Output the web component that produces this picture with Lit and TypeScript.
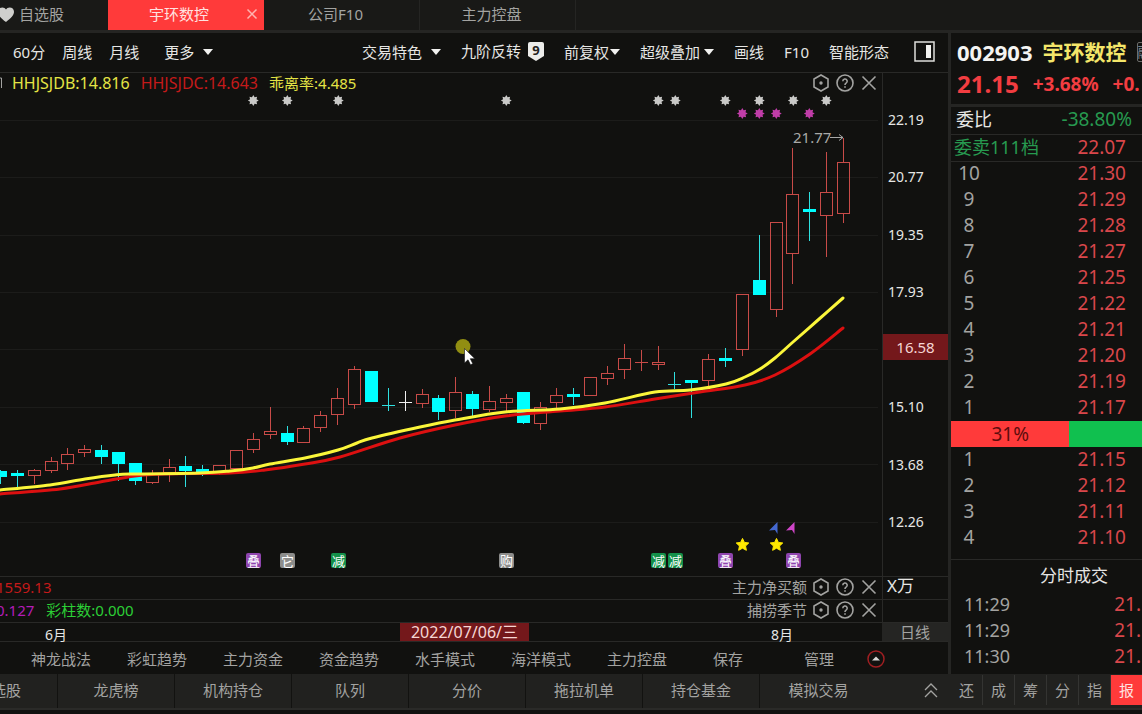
import { LitElement, html, svg, css } from "lit";
import { customElement } from "lit/decorators.js";
import { classMap } from "lit/directives/class-map.js";
import { styleMap } from "lit/directives/style-map.js";

type Kind = "up" | "down" | "flat";
/** [high, low, body top, body bottom, kind] in canvas units */
type Candle = [number, number, number, number, Kind];

const CANDLES: Candle[] = [
  [470, 484, 471, 477, "down"], [470, 487, 473, 476, "down"], [469, 484, 470, 475, "up"],
  [457, 473, 461, 470, "up"], [448, 470, 454, 463, "up"], [445, 457, 449, 452, "up"],
  [445, 464, 450, 457, "down"], [452, 481, 452, 464, "down"], [463, 485, 463, 481, "down"],
  [470, 484, 474, 482, "up"], [459, 482, 467, 472, "up"], [456, 487, 466, 471, "down"],
  [465, 476, 469, 472, "down"], [465, 475, 465, 471, "up"], [450, 468, 450, 468, "up"],
  [433, 453, 439, 449, "up"], [407, 439, 431, 434, "up"], [426, 445, 433, 442, "down"],
  [426, 442, 428, 442, "up"], [411, 432, 415, 427, "up"], [388, 425, 398, 414, "up"],
  [366, 409, 369, 404, "up"], [371, 402, 371, 402, "down"], [388, 411, 405, 405, "down"],
  [391, 411, 402, 402, "flat"], [389, 408, 394, 403, "up"], [395, 420, 398, 412, "down"],
  [377, 418, 392, 410, "up"], [391, 416, 394, 409, "down"], [386, 412, 401, 409, "up"],
  [394, 411, 398, 402, "up"], [392, 424, 392, 423, "down"], [402, 430, 407, 423, "up"],
  [388, 408, 395, 402, "up"], [388, 405, 394, 397, "down"], [377, 395, 377, 395, "up"],
  [366, 385, 373, 378, "up"], [344, 379, 358, 369, "up"], [350, 371, 362, 362, "up"],
  [346, 370, 362, 364, "up"], [372, 389, 384, 384, "down"], [380, 418, 380, 383, "down"],
  [354, 386, 359, 380, "up"], [348, 367, 358, 361, "down"], [294, 356, 294, 349, "up"],
  [235, 295, 280, 295, "down"], [222, 317, 222, 309, "up"], [148, 284, 194, 253, "up"],
  [192, 241, 209, 212, "down"], [152, 257, 192, 215, "up"], [138, 223, 162, 213, "up"],
];

const FAST: [number, number][] = [
  [0, 490], [50, 485], [85, 479], [115, 475], [135, 474], [200, 473], [230, 471], [253, 468],
  [270, 464], [305, 458], [338, 450], [357, 443], [372, 438], [420, 427], [455, 420], [505, 412],
  [560, 409], [605, 403], [655, 392], [690, 390], [726, 384], [745, 377], [760, 369], [775, 358],
  [793, 342], [818, 320], [843, 298],
];
const SLOW: [number, number][] = [
  [0, 494], [60, 489], [100, 482], [135, 476], [165, 474], [230, 473], [265, 470], [305, 464],
  [340, 457], [400, 438], [455, 425], [505, 416], [560, 411], [605, 407], [655, 399], [700, 392],
  [745, 385], [775, 375], [810, 354], [843, 328],
];

const GRID = [120, 177, 235, 292, 349, 407, 464, 522];
const PRICES = ["22.19", "20.77", "19.35", "17.93", "", "15.10", "13.68", "12.26"];
const SUNS = [253, 287, 338, 506, 658, 675, 725, 759, 793, 826];
const PINK_SUNS = [742, 759, 776, 809];
const EVENTS: [number, string, string][] = [
  [253, "叠", "#8f45ae"], [287, "它", "#8d8d8b"], [338, "减", "#14904a"], [506, "购", "#8d8d8b"],
  [658, "减", "#14904a"], [675, "减", "#14904a"], [725, "叠", "#8f45ae"], [793, "叠", "#8f45ae"],
];

const ASKS = [
  ["10", "21.30"], ["9", "21.29"], ["8", "21.28"], ["7", "21.27"], ["6", "21.25"],
  ["5", "21.22"], ["4", "21.21"], ["3", "21.20"], ["2", "21.19"], ["1", "21.17"],
];
const BIDS = [["1", "21.15"], ["2", "21.12"], ["3", "21.11"], ["4", "21.10"]];
const TRADES = ["11:29", "11:29", "11:30"];

/** Catmull-Rom spline through the points. */
function smooth(p: [number, number][]): string {
  let d = `M${p[0][0]} ${p[0][1]}`;
  for (let i = 0; i < p.length - 1; i++) {
    const a = p[Math.max(i - 1, 0)], b = p[i], c = p[i + 1], e = p[Math.min(i + 2, p.length - 1)];
    d += `C${b[0] + (c[0] - a[0]) / 6} ${b[1] + (c[1] - a[1]) / 6} ${c[0] - (e[0] - b[0]) / 6} ${c[1] - (e[1] - b[1]) / 6} ${c[0]} ${c[1]}`;
  }
  return d;
}

const FONT = css`"Noto Sans", "Noto Sans CJK SC", sans-serif`;

@customElement("price-chart")
export class PriceChart extends LitElement {
  static styles = css`
    :host { display: block; }
    .canvas { display: block; width: 100%; height: auto; font-family: ${FONT}; }
    .grid { stroke: #1c1c1a; }
    .up { stroke: #c84b48; fill: none; }
    .down { stroke: #2fe0e0; fill: #00ffff; }
    .flat { stroke: #f0f0f0; fill: none; }
    .solid { stroke: none; }
    .line { fill: none; stroke-width: 3; stroke-linecap: round; }
    .fast { stroke: #fbf63a; }
    .slow { stroke: #dc1010; }
    .peak { font-size: 15px; fill: #a9a9a7; }
    .arrow { fill: none; stroke: #a9a9a7; }
    .event { font-size: 13px; fill: #ffffff; text-anchor: middle; }
    .sun { fill: #c9c9c7; }
    .pink { fill: #c03da8; }
    .star { fill: #ffe800; stroke: #ffe800; stroke-linejoin: round; }
    .pointer { fill: #ffffff; stroke: #111111; stroke-width: 0.6; }
  `;

  private candle([high, low, top, bottom, kind]: Candle, i: number) {
    const x = Math.floor(843.5 - 16.86 * (50 - i)) + 0.5;
    const thin = top === bottom;
    return svg`<g class=${kind}>
      ${kind === "up" && !thin
        ? svg`<path d="M${x} ${high}V${top}M${x} ${bottom + 1}V${low}" />
              <rect x=${x - 6} y=${top + 0.5} width="12" height=${bottom - top} />`
        : svg`<path d="M${x} ${high}V${low}" />
              ${thin
                ? svg`<path d="M${x - 6.5} ${top + 0.5}h13" />`
                : svg`<rect class="solid" x=${x - 6.5} y=${top} width="13" height=${bottom - top} />`}`}
    </g>`;
  }

  private sun(x: number, y: number, cls: string) {
    let d = "";
    for (let k = 0; k < 16; k++) {
      const r = k % 2 ? 3.5 : 5.4;
      const t = (Math.PI * k) / 8;
      d += `${k ? "L" : "M"}${(x + 0.3 + r * Math.cos(t)).toFixed(2)} ${(y + r * Math.sin(t)).toFixed(2)}`;
    }
    return svg`<path class=${cls} d="${d}Z" />`;
  }

  private star(x: number, y: number) {
    let d = "";
    for (let k = 0; k < 10; k++) {
      const r = k % 2 ? 3.2 : 6.6;
      const t = (Math.PI * k) / 5 - Math.PI / 2;
      d += `${k ? "L" : "M"}${(x + r * Math.cos(t)).toFixed(2)} ${(y + r * Math.sin(t)).toFixed(2)}`;
    }
    return svg`<path class="star" d="${d}Z" />`;
  }

  render() {
    return html`<svg class="canvas" viewBox="0 95 882 481" role="img" aria-label="K线">
      ${GRID.map((y) => svg`<path class="grid" d="M0 ${y + 0.5}H878" />`)}
      ${CANDLES.map((c, i) => this.candle(c, i))}
      <path class="line slow" d=${smooth(SLOW)} />
      <path class="line fast" d=${smooth(FAST)} />
      ${SUNS.map((x) => this.sun(x, 100.5, "sun"))}
      ${PINK_SUNS.map((x) => this.sun(x, 113.5, "pink"))}
      <text class="peak" x="793" y="143">21.77</text>
      <path class="arrow" d="M830 137.5h13M839 134.5l4 3l-4 3" />
      <path d="M777.500 522v12l-2.500-4l-6 .5z" fill="#4468d0" />
      <path d="M794.500 522v12l-2.500-4l-6 .5z" fill="#cf45c8" />
      ${this.star(742.5, 545)} ${this.star(776.5, 545)}
      ${EVENTS.map(([x, label, fill]) => svg`
        <rect x=${x - 7} y="553" width="15" height="15" rx="2" fill=${fill} />
        <text class="event" x=${x + 0.5} y="565.5">${label}</text>`)}
      <circle cx="463" cy="346.500" r="7.500" fill="#918e12" />
      <path class="pointer" d="M464.500 348.500v14.500l3.500-3.200l2.600 5l2.200-1.100l-2.500-5h4.600z" />
    </svg>`;
  }
}

@customElement("app-root")
export class AppRoot extends LitElement {
  static styles = css`
    :host {
      display: block;
      min-height: 100vh;
      background: #11110f;
      color: #e6e6e4;
      font: 15px/20px ${FONT};
      overflow: hidden;
      white-space: nowrap;
    }
    * { box-sizing: border-box; }
    button {
      margin: 0; padding: 0; border: 0; background: none; color: inherit;
      font: inherit; white-space: nowrap; cursor: pointer;
      display: flex; align-items: center; justify-content: center;
    }
    svg { display: block; flex: none; overflow: visible; }

    .tabs { display: flex; height: 33px; background: #191917; border-bottom: 3px solid #252523; color: #a3a3a1; }
    .watch { width: 108px; justify-content: flex-start; gap: 5px; padding-bottom: 2px; }
    .heart { margin-left: -2px; }
    .tab { width: 156px; border-right: 1px solid #252523; padding-right: 12px; padding-bottom: 2px; }
    .tab.active { background: #ff3a3a; color: #ffe2e0; justify-content: space-between; padding: 0 6px 2px 41px; border: 0; }

    .body { display: grid; grid-template-columns: minmax(0, 1fr) 191px; }
    .main { border-right: 3px solid #252523; min-width: 0; }

    .toolbar { display: flex; align-items: center; height: 40px; padding: 0 13px 2px; border-bottom: 1px solid #292927; }
    .periods { display: flex; gap: 17px; }
    .more { gap: 9px; margin-left: 8px; }
    .tools { display: flex; align-items: center; gap: 20px; margin-left: auto; }
    .tools button { gap: 4px; }
    .tools .wide { gap: 9px; }
    .tools .tight { gap: 1px; }
    .tools .shield { gap: 7px; padding-bottom: 2px; }
    .tools .layout { margin-left: 5px; }

    .chart-area { display: grid; grid-template-columns: minmax(0, 1fr) 66px; }
    .indicators { display: flex; align-items: center; height: 22px; padding: 0 4px 2px 0; overflow: hidden; }
    .cut { width: 12px; color: #a3a3a1; flex: none; }
    .i-main { font-size: 16px; margin-right: 11px; }
    .yellow { color: #e4e445; }
    .red { color: #c41a1a; }
    .magenta { color: #b41cb8; }
    .green { color: #2ccf36; }
    .tools-right { display: flex; align-items: center; gap: 6px; margin-left: auto; color: #a3a3a1; }
    .tools-right span { margin-right: -1px; }

    .axis {
      position: relative; border-left: 1px solid #292927; padding: 37px 0 44px 5px;
      display: flex; flex-direction: column; justify-content: space-between; font-size: 14px;
    }
    .axis span { height: 20px; }
    .axis .mark {
      position: absolute; top: 261px; left: 0; right: 0; height: 26px; line-height: 26px;
      background: #74181b; color: #f5d6d4; text-align: center; font-size: 15px;
    }

    .sub { display: grid; grid-template-columns: minmax(0, 1fr) 66px; height: 23px; border-top: 1px solid #292927; }
    .readout { display: flex; align-items: center; padding: 0 4px 2px 0; overflow: hidden; }
    .readout .first { margin-left: -4px; margin-right: 12px; }
    .unit { border-left: 1px solid #292927; padding-left: 4px; font-size: 17px; line-height: 18px; }

    .dates { display: flex; height: 20px; border-top: 1px solid #292927; border-bottom: 1px solid #292927; }
    .timeline { flex: 1; display: flex; padding: 0 89px 0 45px; font-size: 14px; line-height: 24px; }
    .gap-a { flex: 333; }
    .gap-b { flex: 242; }
    .date-mark { width: 129px; background: #74181b; color: #f5d6d4; font-size: 16px; line-height: 19px; text-align: center; }
    .cycle { width: 66px; background: #252523; color: #a3a3a1; }

    .templates { display: flex; height: 32px; padding: 1px 0 0 13px; color: #a3a3a1; }
    .templates button { width: 96px; }
    .templates .short { width: 86px; }
    .templates .up { width: 18px; }

    .foot { display: grid; grid-template-columns: minmax(0, 1fr) 194px; height: 36px; background: #21211f; border-bottom: 2px solid #2a2a28; color: #a3a3a1; }
    .links { display: flex; overflow: hidden; }
    .links button { width: 117px; flex: none; border-right: 1px solid #121210; padding-bottom: 2px; }
    .links .first { width: 58px; justify-content: flex-start; }
    .first span { margin-left: -9px; }
    .links .last { border: 0; }
    .links .expand { width: 20px; margin-left: auto; margin-right: 7px; border: 0; }
    .modes { display: grid; grid-template-columns: repeat(5, 32px) 1fr; padding: 1px 0 3px 3px; }
    .modes button { border-right: 1px solid #343432; padding-bottom: 1px; }
    .modes .on { background: #ff3a3a; color: #ffe2e0; border: 0; }

    .quote { overflow: hidden; font-size: 18px; line-height: 26px; }
    .head { height: 74px; border-bottom: 3px solid #252523; font-weight: 700; padding: 3px 0 0 6px; }
    .name-row { display: flex; align-items: center; height: 31px; gap: 10px; font-size: 21px; }
    .code { font-size: 22px; color: #f4f4f2; }
    .name { color: #f4e66a; }
    .flag { width: 20px; height: 20px; flex: none; border: 1px solid #6c6c6a; border-radius: 2px; color: #77808a; font-size: 14px; font-weight: 400; line-height: 18px; overflow: hidden; }
    .price-row { display: flex; align-items: center; height: 34px; gap: 14px; font-size: 19px; line-height: 24px; color: #f23d41; }
    .last-price { font-size: 24px; line-height: 30px; }

    table { width: 100%; border-collapse: collapse; table-layout: fixed; }
    th, td { padding: 0; height: 26px; line-height: 24px; font-weight: 400; vertical-align: top; }
    .label { text-align: left; padding-left: 5px; width: 98px; }
    .near { padding-left: 3px; color: #279a50; }
    .value { text-align: right; font-size: 19px; padding-right: 16px; color: #d9474b; }
    .ratio { color: #279a50; padding-right: 10px; }
    .ruled th, .ruled td { height: 27px; line-height: 25px; border-bottom: 1px solid #292927; }
    .asks { margin-top: -1px; }
    .level { color: #a3a3a1; text-align: center; font-size: 19px; width: 36px; }
    .bar { display: flex; height: 26px; background: #10c04f; font-size: 19px; }
    .bar div { background: #ff3a3a; color: #5c0d0d; text-align: center; }
    .deals { border-top: 1px solid #292927; margin-top: 8px; padding-left: 13px; }
    .deals h2 { margin: 0; padding: 2px 34px 2px 0; font-size: 17px; line-height: 28px; font-weight: 400; text-align: right; }
    .time { text-align: left; color: #a3a3a1; font-size: 18px; }
    .deal { text-align: right; color: #d9474b; font-size: 19px; padding-right: 1px; }
  `;

  private caret = html`<svg width="10" height="6" viewBox="0 0 10 6" aria-hidden="true"><path d="M0 0h10L5 6z" fill="#f2f2f0" /></svg>`;

  private panelButtons = html`
    <button aria-label="设置"><svg width="18" height="18" viewBox="0 0 18 18" fill="none" stroke="#a3a3a1" stroke-width="1.600"><path d="M9 1l7 4v8l-7 4l-7-4V5z" /><circle cx="9" cy="9" r="1.700" fill="#a3a3a1" stroke="none" /></svg></button>
    <button aria-label="帮助"><svg width="18" height="18" viewBox="0 0 18 18" fill="none" stroke="#a3a3a1" stroke-width="1.600"><circle cx="9" cy="9" r="8" /><path d="M6.800 7.200a2.200 2.200 0 1 1 3.300 1.900c-.8.500-1.100.9-1.100 1.900M9 12.200v1.500" /></svg></button>
    <button aria-label="关闭"><svg width="18" height="18" viewBox="0 0 18 18" fill="none" stroke="#a3a3a1" stroke-width="1.600"><path d="M2.500 2.500l13 13M15.500 2.500l-13 13" /></svg></button>`;

  private header() {
    return html`<nav class="tabs">
      <button class="watch">
        <svg class="heart" width="16" height="15" viewBox="0 0 16 15"><path d="M8 15C3 11 0 8.500 0 4.800C0 2 2 .5 4.300.5C6 .5 7.300 1.300 8 2.600C8.700 1.300 10 .5 11.700.5C14 .5 16 2 16 4.800C16 8.500 13 11 8 15z" fill="#cfcfcd" /></svg>
        自选股
      </button>
      <button class="tab active">宇环数控
        <svg width="12" height="12" viewBox="0 0 12 12" stroke="#ffb3b0" stroke-width="1.500"><path d="M1.500 1.500l9 9M10.500 1.500l-9 9" /></svg>
      </button>
      <button class="tab">公司F10</button>
      <button class="tab">主力控盘</button>
    </nav>`;
  }

  private toolbar() {
    return html`<div class="toolbar">
      <div class="periods">
        <button>60分</button><button>周线</button><button>月线</button>
        <button class="more">更多 ${this.caret}</button>
      </div>
      <div class="tools">
        <button class="wide">交易特色 ${this.caret}</button>
        <button class="shield">九阶反转
          <svg width="16" height="20" viewBox="0 0 16 20"><path d="M2 1h12q2 0 2 2v12l-8 5l-8-5V3q0-2 2-2z" fill="#ececea" /><text x="8" y="14" text-anchor="middle" font-size="13" font-weight="700" fill="#222220">9</text></svg>
        </button>
        <button class="tight">前复权 ${this.caret}</button>
        <button>超级叠加 ${this.caret}</button>
        <button>画线</button><button>F10</button><button>智能形态</button>
        <button class="layout" aria-label="侧栏"><svg width="21" height="21" viewBox="0 0 21 21"><rect x="1" y="1" width="19" height="19" fill="none" stroke="#dededc" stroke-width="1.500" /><path d="M12 4h5v13h-5z" fill="#f2f2f0" /></svg></button>
      </div>
    </div>`;
  }

  private main() {
    return html`<section class="main">
      ${this.toolbar()}
      <div class="chart-area">
        <div>
          <div class="indicators">
            <span class="cut"><svg width="2" height="10" viewBox="0 0 2 10"><path d="M0 0h1.500v10" fill="none" stroke="#a3a3a1" /></svg></span>
            <span class="yellow i-main">HHJSJDB:14.816</span>
            <span class="red i-main">HHJSJDC:14.643</span>
            <span class="yellow">乖离率:4.485</span>
            <div class="tools-right">${this.panelButtons}</div>
          </div>
          <price-chart></price-chart>
        </div>
        <div class="axis">
          ${PRICES.map((p) => html`<span>${p}</span>`)}
          <div class="mark">16.58</div>
        </div>
      </div>
      <div class="sub">
        <div class="readout"><span class="red first">1559.13</span>
          <div class="tools-right"><span>主力净买额</span>${this.panelButtons}</div></div>
        <div class="unit">X万</div>
      </div>
      <div class="sub">
        <div class="readout"><span class="magenta first">0.127</span><span class="green">彩柱数:0.000</span>
          <div class="tools-right"><span>捕捞季节</span>${this.panelButtons}</div></div>
        <div class="unit"></div>
      </div>
      <div class="dates">
        <div class="timeline">
          <span>6月</span><span class="gap-a"></span><span class="date-mark">2022/07/06/三</span>
          <span class="gap-b"></span><span>8月</span>
        </div>
        <button class="cycle">日线</button>
      </div>
      <div class="templates">
        ${["神龙战法", "彩虹趋势", "主力资金", "资金趋势", "水手模式", "海洋模式", "主力控盘"].map((t) => html`<button>${t}</button>`)}
        <button class="short">保存</button><button>管理</button>
        <button class="up" aria-label="展开"><svg width="18" height="18" viewBox="0 0 18 18"><circle cx="9" cy="9" r="8" fill="none" stroke="#a01f22" stroke-width="1.500" /><path d="M5 10.500l4-4l4 4z" fill="#d8d8d6" /></svg></button>
      </div>
    </section>`;
  }

  private quote() {
    return html`<aside class="quote">
      <div class="head">
        <div class="name-row"><span class="code">002903</span><span class="name">宇环数控</span><span class="flag">融</span></div>
        <div class="price-row"><span class="last-price">21.15</span><span>+3.68%</span><span>+0.</span></div>
      </div>
      <table class="ruled">
        <tr><th class="label">委比</th><td class="value ratio">-38.80%</td></tr>
        <tr><th class="label near">委卖111档</th><td class="value">22.07</td></tr>
      </table>
      <table class="asks">${ASKS.map(([n, p]) => html`<tr><th class="level">${n}</th><td class="value">${p}</td></tr>`)}</table>
      <div class="bar"><div style=${styleMap({ width: "62%" })}>31%</div></div>
      <table>${BIDS.map(([n, p]) => html`<tr><th class="level">${n}</th><td class="value">${p}</td></tr>`)}</table>
      <div class="deals">
        <h2>分时成交</h2>
        <table>${TRADES.map((t) => html`<tr><th class="time">${t}</th><td class="deal">21.</td></tr>`)}</table>
      </div>
    </aside>`;
  }

  private footer() {
    return html`<footer class="foot">
      <div class="links">
        <button class="first"><span>选股</span></button>
        ${["龙虎榜", "机构持仓", "队列", "分价", "拖拉机单", "持仓基金", "模拟交易"].map(
          (t, i) => html`<button class=${classMap({ last: i === 6 })}>${t}</button>`)}
        <button class="expand" aria-label="更多"><svg width="14" height="16" viewBox="0 0 14 16" fill="none" stroke="#a3a3a1" stroke-width="1.300"><path d="M1 8l6-6l6 6M1 15l6-6l6 6" /></svg></button>
      </div>
      <div class="modes">
        ${["还", "成", "筹", "分", "指", "报"].map((t, i) => html`<button class=${classMap({ on: i === 5 })}>${t}</button>`)}
      </div>
    </footer>`;
  }

  render() {
    return html`${this.header()}
      <div class="body">${this.main()}${this.quote()}</div>
      ${this.footer()}`;
  }
}
